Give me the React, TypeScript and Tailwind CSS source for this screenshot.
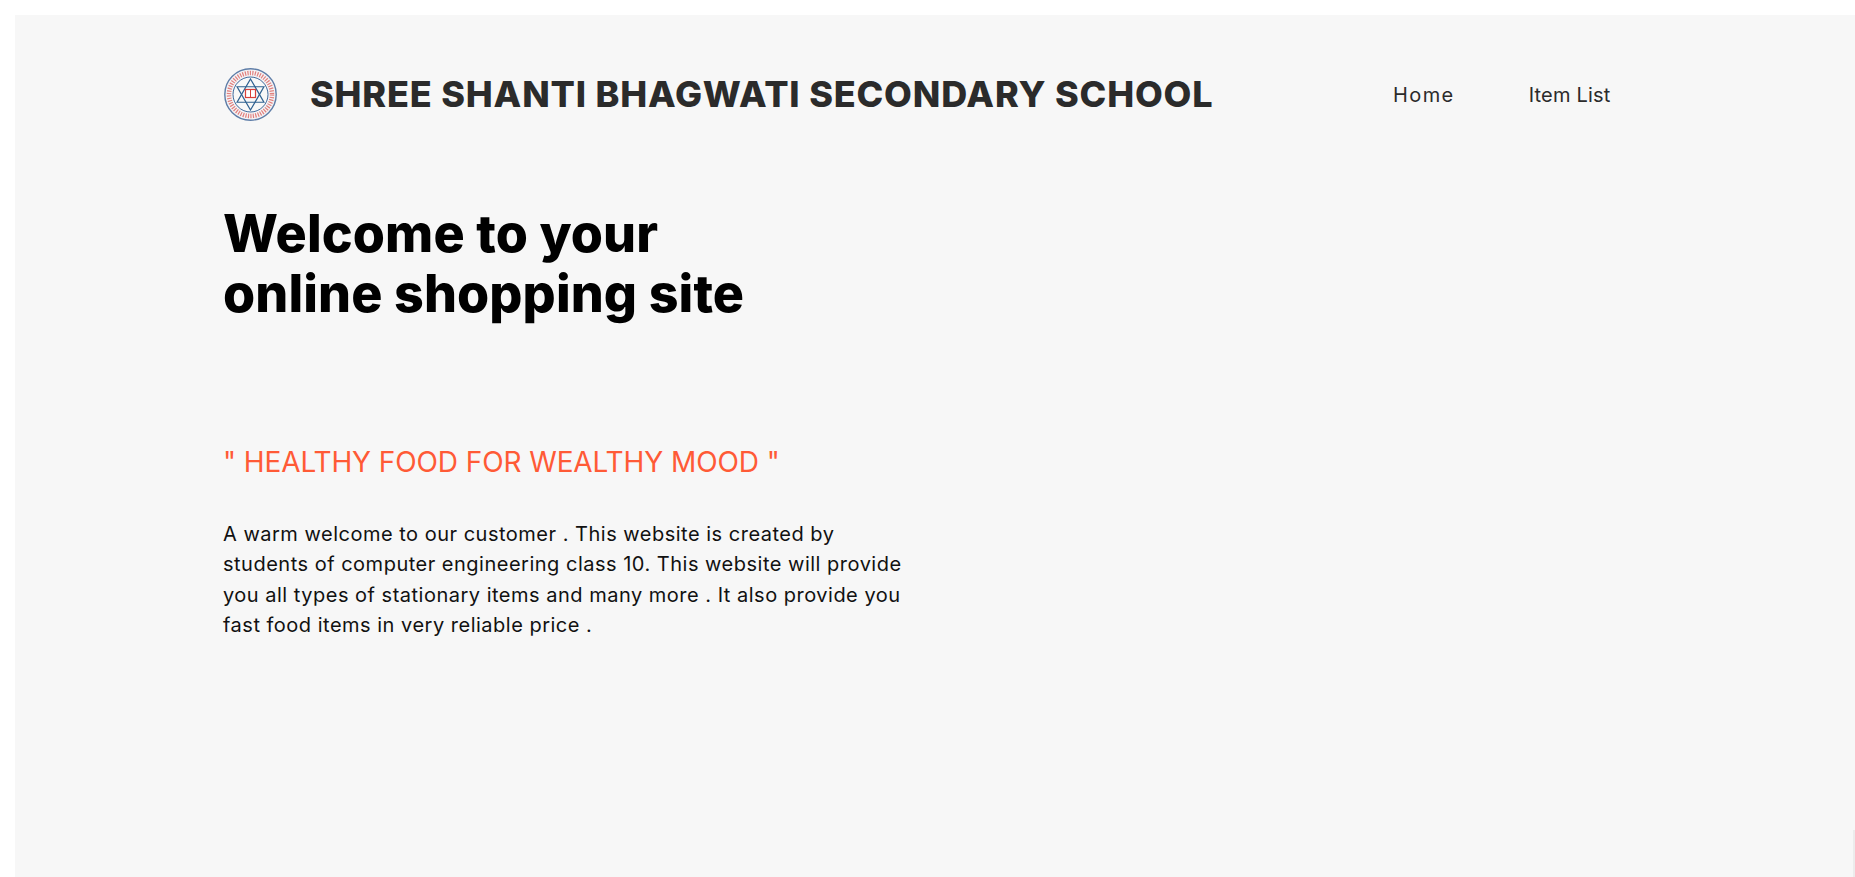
const font = "font-['Inter',sans-serif]";

function Logo() {
  return (
    <svg viewBox="0 0 53 53" className="ml-[1px] h-[53px] w-[53px] shrink-0">
      <circle cx="26.5" cy="26.5" r="25.7" fill="#f5f3f5" stroke="#5f7ea8" strokeWidth="1.4" />
      <circle cx="26.5" cy="26.5" r="21.5" fill="none" stroke="#d8504c" strokeWidth="4.5" strokeDasharray="1.2 1.3" opacity="0.7" />
      <circle cx="26.5" cy="26.5" r="17.5" fill="#f8f8f8" stroke="#3f6a9c" strokeWidth="1" />
      <polygon points="26.5,11 39.9,34.25 13.1,34.25" fill="none" stroke="#2f6190" strokeWidth="1.2" />
      <polygon points="26.5,42 39.9,18.75 13.1,18.75" fill="none" stroke="#2f6190" strokeWidth="1.2" />
      <rect x="21.5" y="21.5" width="10" height="8" fill="#fff" stroke="#d9403a" strokeWidth="1.2" />
      <line x1="26.5" y1="21.5" x2="26.5" y2="29.5" stroke="#d9403a" strokeWidth="1" />
    </svg>
  );
}

export default function App() {
  return (
    <div className={`${font} relative min-h-[877px] bg-white pl-[15px] pt-[15px]`}>
      <div className="h-[862px] overflow-hidden bg-[#f7f7f7] pl-[208px]">
        <header className="flex items-center pt-[53px]">
          <Logo />
          <h1 className="ml-[33px] w-[1083px] text-[36px] leading-[53px] font-extrabold tracking-[0.82px] whitespace-nowrap text-[#2b2b2b]">
            SHREE SHANTI BHAGWATI SECONDARY SCHOOL
          </h1>
          <nav className="flex gap-[74px] text-[20px] text-[#2b2b2b]">
            <a className="tracking-[1.4px]">Home</a>
            <a className="tracking-[0.2px]">Item List</a>
          </nav>
        </header>
        <main className="pt-[83px]">
          <h2 className="text-[52px] leading-[60px] font-extrabold tracking-[0.1px] text-black">
            Welcome to your
            <br />
            online shopping site
          </h2>
          <p className="mt-[118px] text-[28px] leading-[40px] tracking-[-0.1px] text-[#ff5a36]">" HEALTHY FOOD FOR WEALTHY MOOD "</p>
          <p className="mt-[37px] w-[700px] text-[20px] leading-[30.4px] tracking-[0.5px] text-[#111]">
            A warm welcome to our customer . This website is created by students of computer engineering class 10. This
            website will provide you all types of stationary items and many more . It also provide you fast food items
            in very reliable price .
          </p>
        </main>
      </div>
      <div className="absolute right-0 bottom-0 h-[47px] w-[2px] bg-[#ececec]" />
    </div>
  );
}
